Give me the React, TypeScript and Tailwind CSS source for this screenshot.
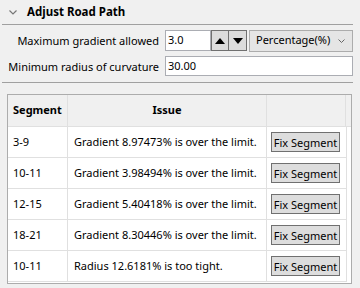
import React from "react";

const ROWS = [
  { seg: "3-9", issue: "Gradient 8.97473% is over the limit." },
  { seg: "10-11", issue: "Gradient 3.98494% is over the limit." },
  { seg: "12-15", issue: "Gradient 5.40418% is over the limit." },
  { seg: "18-21", issue: "Gradient 8.30446% is over the limit." },
  { seg: "10-11", issue: "Radius 12.6181% is too tight." },
];

export default function App() {
  return (
    <div
      className="w-[360px] h-[288px] bg-[#f0f0f0] text-[11px] text-black overflow-hidden whitespace-nowrap"
      style={{ fontFamily: '"Noto Sans", "Open Sans", sans-serif' }}
    >
      {/* header */}
      <div className="ml-[2px] mr-[7px] h-[25px] flex items-center border-b border-[#a0a0a0]">
        <svg width="8" height="5" viewBox="0 0 8 5" className="ml-[7px] mr-[10px]">
          <path d="M0.5 0.5 L4 4 L7.5 0.5" fill="none" stroke="#777" strokeWidth="1.2" />
        </svg>
        <span className="font-bold text-[11.5px] leading-none">Adjust Road Path</span>
      </div>

      {/* form */}
      <div className="ml-[2px] mr-[7px] pt-[5px] pb-[6px] border-b border-[#a0a0a0] flex flex-col gap-[5px]">
        <div className="flex items-center h-[21px]">
          <span className="w-[163px] text-right pr-[6px] leading-none">Maximum gradient allowed</span>
          <div className="w-[46px] h-[21px] bg-white border border-[#abadb3] flex items-center pl-[2px]">3.0</div>
          <button className="w-[18px] h-[21px] bg-[#dcdcdc] border border-[#707070] flex items-center justify-center">
            <svg width="10" height="6" viewBox="0 0 10 6"><path d="M0 6 L5 0 L10 6 Z" fill="#000" /></svg>
          </button>
          <button className="w-[18px] h-[21px] bg-[#dcdcdc] border border-[#707070] border-l-0 flex items-center justify-center">
            <svg width="10" height="6" viewBox="0 0 10 6"><path d="M0 0 L5 6 L10 0 Z" fill="#000" /></svg>
          </button>
          <div className="ml-[2px] flex-1 h-[22px] bg-[#e5e5e5] border border-[#acacac] flex items-center justify-between pl-[6px] pr-[7px]">
            <span>Percentage(%)</span>
            <svg width="7" height="4" viewBox="0 0 7 4"><path d="M0.5 0.5 L3.5 3.5 L6.5 0.5" fill="none" stroke="#666" strokeWidth="1" /></svg>
          </div>
        </div>
        <div className="flex items-center h-[20px]">
          <span className="w-[163px] text-right pr-[6px] leading-none">Minimum radius of curvature</span>
          <div className="flex-1 h-[20px] bg-white border border-[#abadb3] flex items-center pl-[2px]">30.00</div>
        </div>
      </div>

      {/* table */}
      <div className="ml-[7px] mr-[8px] mt-[11px] h-[190px] border border-[#acacac] bg-white flex flex-col">
        <div className="flex h-[32px] bg-[#f0f0f0] border-b border-[#e0e0e0]">
          <div className="w-[60px] border-r border-[#e0e0e0] flex items-center pl-[5px] font-bold">Segment</div>
          <div className="w-[199px] border-r border-[#e0e0e0] flex items-center justify-center font-bold">Issue</div>
          <div className="w-[79px] border-r border-[#e0e0e0]" />
          <div className="flex-1" />
        </div>
        {ROWS.map((r, i) => (
          <div key={i} className="flex h-[31px]">
            <div className="flex w-[339px] border-b border-[#e0e0e0] border-r">
              <div className="w-[60px] border-r border-[#e0e0e0] flex items-center pl-[5px]">{r.seg}</div>
              <div className="w-[199px] border-r border-[#e0e0e0] flex items-center pl-[6px]">{r.issue}</div>
              <div className="w-[79px] flex items-center pl-[4px]">
                <button className="w-[69px] h-[20px] bg-[#dddddd] border border-[#707070] flex items-center justify-center leading-none">
                  Fix Segment
                </button>
              </div>
            </div>
            <div className="flex-1" />
          </div>
        ))}
      </div>
    </div>
  );
}
